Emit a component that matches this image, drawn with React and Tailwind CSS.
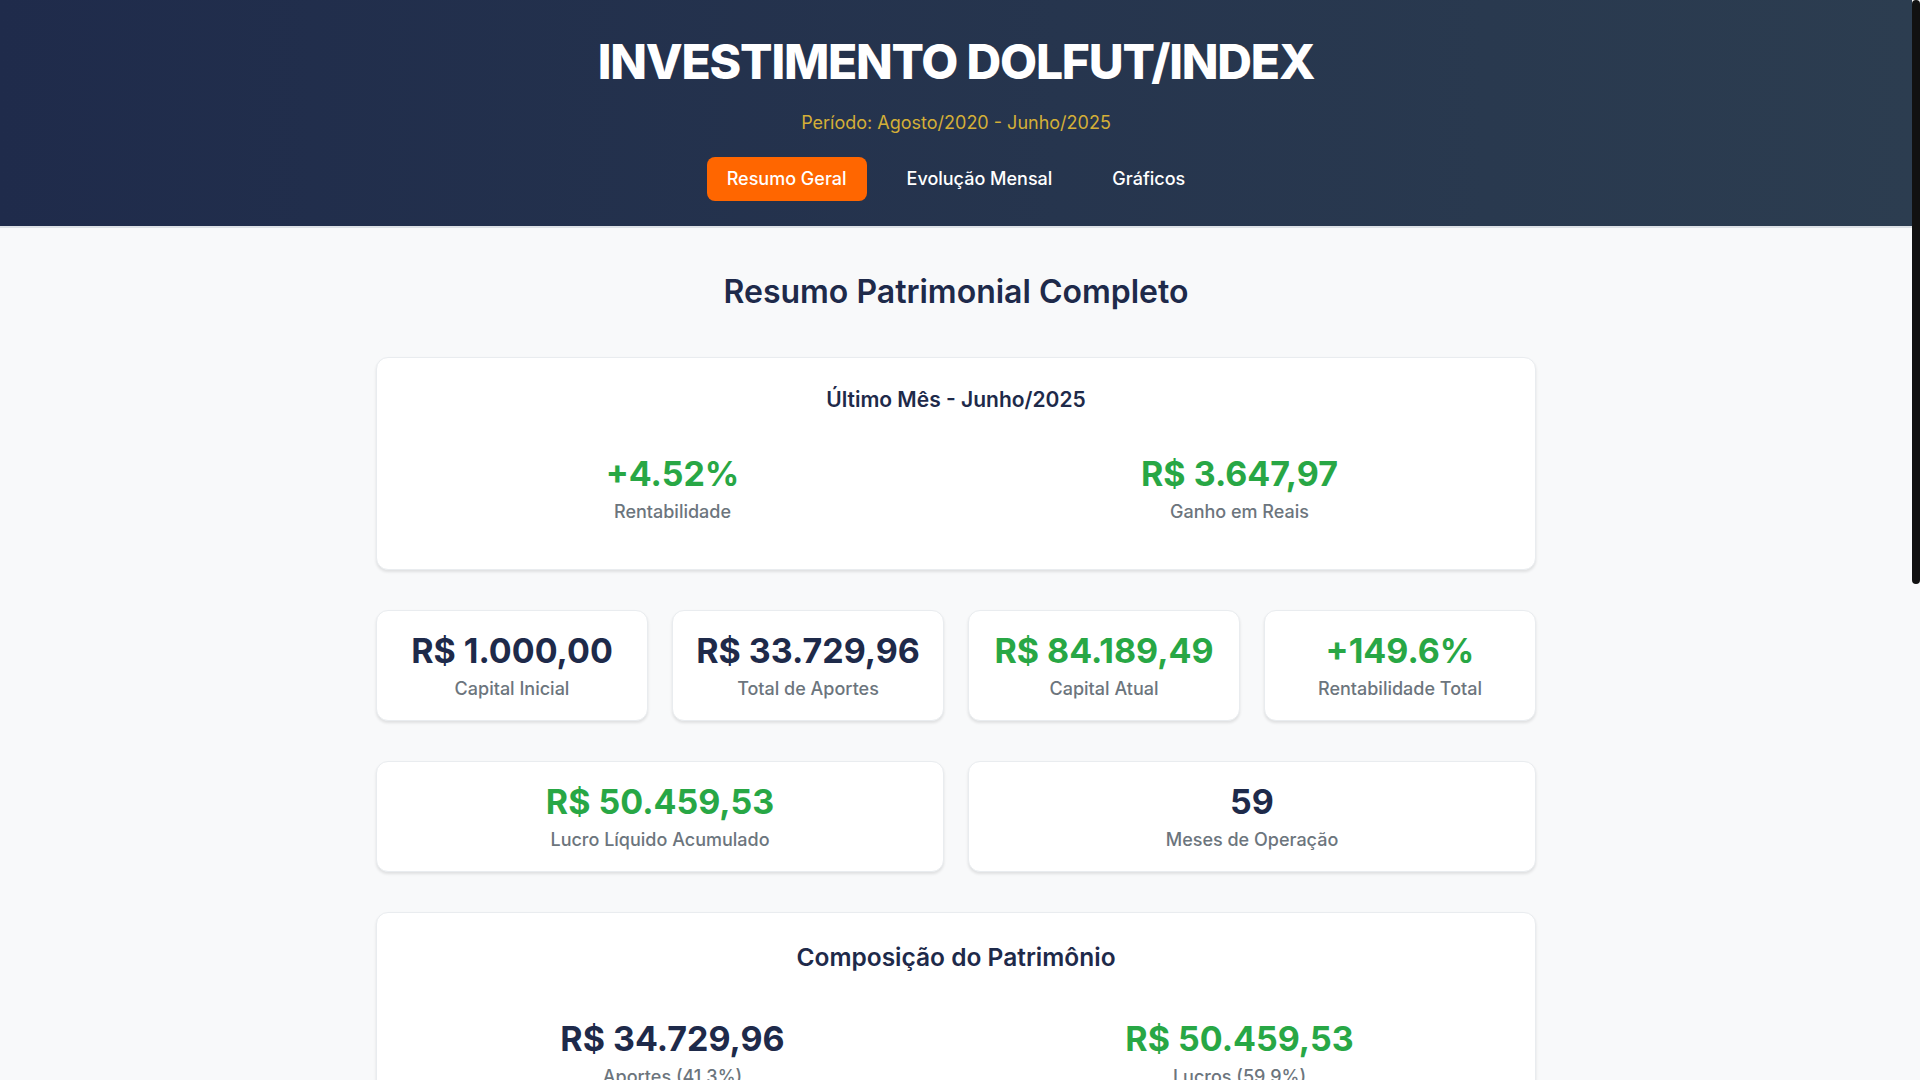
const tabs = ["Resumo Geral", "Evolução Mensal", "Gráficos"];

const destaques = [
  { value: "R$ 1.000,00", label: "Capital Inicial", green: false },
  { value: "R$ 33.729,96", label: "Total de Aportes", green: false },
  { value: "R$ 84.189,49", label: "Capital Atual", green: true },
  { value: "+149.6%", label: "Rentabilidade Total", green: true },
];

const anos = [
  { ano: "2020", aportes: "R$ 4.500,00", lucro: "R$ 1.212,40", rent: "+18.4%" },
  { ano: "2021", aportes: "R$ 6.200,00", lucro: "R$ 5.874,15", rent: "+36.2%" },
  { ano: "2022", aportes: "R$ 6.800,00", lucro: "R$ 9.931,72", rent: "+31.5%" },
  { ano: "2023", aportes: "R$ 7.100,00", lucro: "R$ 12.406,88", rent: "+27.9%" },
  { ano: "2024", aportes: "R$ 6.329,96", lucro: "R$ 13.118,31", rent: "+21.3%" },
  { ano: "2025", aportes: "R$ 2.800,00", lucro: "R$ 7.916,07", rent: "+10.6%" },
];

function StatCard({ value, label, green }) {
  return (
    <div className="rounded-xl border border-[#e9ecef] bg-white px-4 pt-5 pb-[19px] text-center shadow-[0_2px_3px_rgba(0,0,0,0.1)]">
      <div
        className={`text-[34px] leading-10 font-bold whitespace-nowrap ${
          green ? "text-[#28a745]" : "text-[#1e2a4a]"
        }`}>
        {value}
      </div>
      <div className="mt-1.5 text-lg leading-6 font-medium text-[#6c757d]">
        {label}
      </div>
    </div>
  );
}

function BigStat({ value, label, green }) {
  return (
    <div className="pt-4 pb-[17px] text-center">
      <div
        className={`text-[34px] leading-10 font-bold whitespace-nowrap ${
          green ? "text-[#28a745]" : "text-[#1e2a4a]"
        }`}>
        {value}
      </div>
      <div className="mt-1.5 text-lg leading-6 font-medium text-[#6c757d]">
        {label}
      </div>
    </div>
  );
}

export default function App() {
  return (
    <div className="flex min-h-screen bg-[#f8f9fa] font-['Inter','Noto_Sans',sans-serif]">
      <div className="min-w-0 flex-1">
        <header className="border-b-2 border-[#dde1e6] bg-linear-to-r from-[#1f2b4b] to-[#2c3d50] pt-[38px] pb-[25px] text-center">
          <h1 className="text-5xl leading-none font-extrabold tracking-tight text-white">
            INVESTIMENTO DOLFUT/INDEX
          </h1>
          <p className="mt-[23px] text-lg leading-7 text-[#d4af37]">
            Período: Agosto/2020 - Junho/2025
          </p>
          <nav className="mt-5 flex justify-center gap-5">
            {tabs.map((tab, i) => (
              <button
                key={tab}
                className={`cursor-pointer rounded-lg px-5 py-2 text-lg leading-7 font-medium text-white ${
                  i === 0 ? "bg-[#ff6600]" : "bg-transparent"
                }`}>
                {tab}
              </button>
            ))}
          </nav>
        </header>

        <main className="mx-auto w-[1160px] pt-11 pb-10">
          <h2 className="mb-[45px] text-center text-[32px] leading-10 font-semibold text-[#1e2a4a]">
            Resumo Patrimonial Completo
          </h2>

          <section className="rounded-xl border border-[#e9ecef] bg-white p-7 shadow-[0_2px_3px_rgba(0,0,0,0.1)]">
            <h3 className="mb-6 text-center text-[21px] leading-7 font-semibold text-[#1e2a4a]">
              Último Mês - Junho/2025
            </h3>
            <div className="grid grid-cols-2 gap-8">
              <BigStat value="+4.52%" label="Rentabilidade" green />
              <BigStat value="R$ 3.647,97" label="Ganho em Reais" green />
            </div>
          </section>

          <div className="mt-10 grid grid-cols-4 gap-6">
            {destaques.map((d) => (
              <StatCard key={d.label} {...d} />
            ))}
          </div>

          <div className="mt-10 grid grid-cols-2 gap-6">
            <StatCard value="R$ 50.459,53" label="Lucro Líquido Acumulado" green />
            <StatCard value="59" label="Meses de Operação" />
          </div>

          <section className="mt-10 rounded-xl border border-[#e9ecef] bg-white p-7 shadow-[0_2px_3px_rgba(0,0,0,0.1)]">
            <h3 className="mb-[30px] text-center text-[24.5px] leading-8 font-semibold text-[#1e2a4a]">
              Composição do Patrimônio
            </h3>
            <div className="grid grid-cols-2 gap-8">
              <BigStat value="R$ 34.729,96" label="Aportes (41.3%)" />
              <BigStat value="R$ 50.459,53" label="Lucros (59.9%)" green />
            </div>
            <div className="mt-4 flex h-7 overflow-hidden rounded-full bg-[#e9ecef]">
              <div className="flex w-[41%] items-center justify-center bg-[#1e2a4a] text-sm font-medium text-white">
                41.3%
              </div>
              <div className="flex flex-1 items-center justify-center bg-[#28a745] text-sm font-medium text-white">
                59.9%
              </div>
            </div>
          </section>

          <section className="mt-10 rounded-xl border border-[#e9ecef] bg-white p-7 shadow-[0_2px_3px_rgba(0,0,0,0.1)]">
            <h3 className="mb-6 text-center text-2xl leading-8 font-semibold text-[#1e2a4a]">
              Indicadores de Desempenho
            </h3>
            <div className="grid grid-cols-3 gap-6">
              <BigStat value="+2.54%" label="Média Mensal" green />
              <BigStat value="+12.87%" label="Melhor Mês" green />
              <BigStat value="-6.31%" label="Pior Mês" />
            </div>
          </section>

          <section className="mt-10 rounded-xl border border-[#e9ecef] bg-white p-7 shadow-[0_2px_3px_rgba(0,0,0,0.1)]">
            <h3 className="mb-6 text-center text-2xl leading-8 font-semibold text-[#1e2a4a]">
              Resumo por Ano
            </h3>
            <table className="w-full text-left text-base">
              <thead>
                <tr className="border-b-2 border-[#e9ecef] text-[#6c757d]">
                  <th className="px-4 py-3 font-semibold">Ano</th>
                  <th className="px-4 py-3 font-semibold">Aportes</th>
                  <th className="px-4 py-3 font-semibold">Lucro</th>
                  <th className="px-4 py-3 text-right font-semibold">Rentabilidade</th>
                </tr>
              </thead>
              <tbody>
                {anos.map((a) => (
                  <tr key={a.ano} className="border-b border-[#f1f3f5] text-[#1e2a4a]">
                    <td className="px-4 py-3 font-semibold">{a.ano}</td>
                    <td className="px-4 py-3">{a.aportes}</td>
                    <td className="px-4 py-3 text-[#28a745]">{a.lucro}</td>
                    <td className="px-4 py-3 text-right font-semibold text-[#28a745]">
                      {a.rent}
                    </td>
                  </tr>
                ))}
              </tbody>
            </table>
          </section>

          <p className="mt-10 text-center text-sm text-[#6c757d]">
            Relatório de acompanhamento · Agosto/2020 a Junho/2025
          </p>
        </main>
      </div>

      {/* barra de rolagem escura do tema */}
      <div className="w-2 shrink-0 bg-[#f8f9fa]" aria-hidden="true">
        <div className="h-[584px] rounded-full bg-[#111]" />
      </div>
    </div>
  );
}
